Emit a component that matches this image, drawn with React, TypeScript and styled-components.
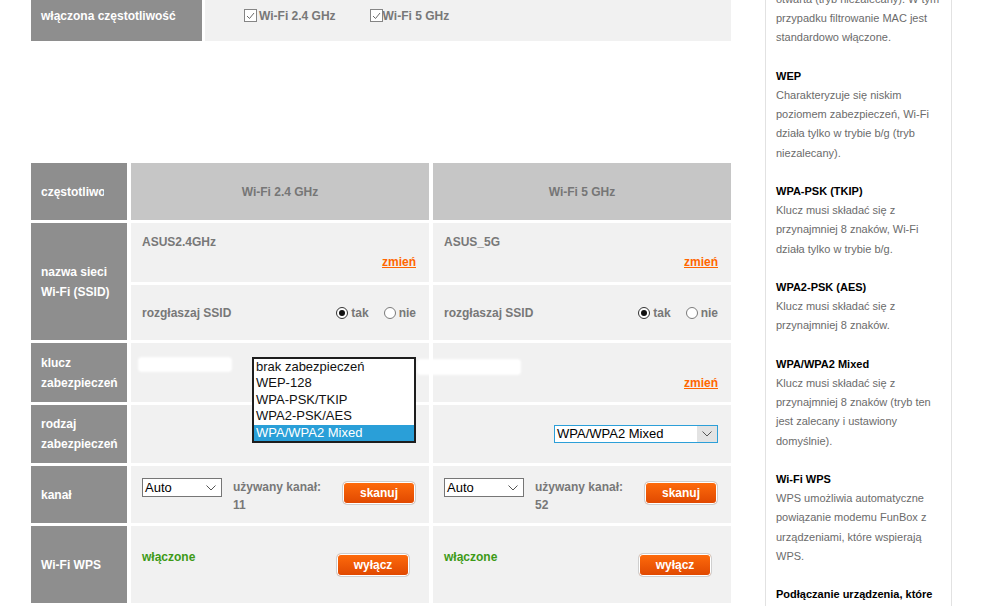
import styled, { createGlobalStyle } from "styled-components";

const GlobalStyle = createGlobalStyle`
  html, body {
    margin: 0;
    padding: 0;
    background: #fff;
  }
  body {
    font-family: "Liberation Sans", Arial, sans-serif;
    overflow: hidden;
  }
`;

interface HelpBlock {
  title?: string;
  lines: string[];
}

const HELP: HelpBlock[] = [
  {
    lines: [
      "otwarta (tryb niezalecany). W tym",
      "przypadku filtrowanie MAC jest",
      "standardowo włączone.",
    ],
  },
  {
    title: "WEP",
    lines: [
      "Charakteryzuje się niskim",
      "poziomem zabezpieczeń, Wi-Fi",
      "działa tylko w trybie b/g (tryb",
      "niezalecany).",
    ],
  },
  {
    title: "WPA-PSK (TKIP)",
    lines: [
      "Klucz musi składać się z",
      "przynajmniej 8 znaków, Wi-Fi",
      "działa tylko w trybie b/g.",
    ],
  },
  {
    title: "WPA2-PSK (AES)",
    lines: ["Klucz musi składać się z", "przynajmniej 8 znaków."],
  },
  {
    title: "WPA/WPA2 Mixed",
    lines: [
      "Klucz musi składać się z",
      "przynajmniej 8 znaków (tryb ten",
      "jest zalecany i ustawiony",
      "domyślnie).",
    ],
  },
  {
    title: "Wi-Fi WPS",
    lines: [
      "WPS umożliwia automatyczne",
      "powiązanie modemu FunBox z",
      "urządzeniami, które wspierają",
      "WPS.",
    ],
  },
  {
    title: "Podłączanie urządzenia, które",
    lines: [],
  },
];

const SECURITY = [
  "brak zabezpieczeń",
  "WEP-128",
  "WPA-PSK/TKIP",
  "WPA2-PSK/AES",
  "WPA/WPA2 Mixed",
];

interface Band {
  name: string;
  ssid: string;
  channel: string;
}

const BANDS: Band[] = [
  { name: "Wi-Fi 2.4 GHz", ssid: "ASUS2.4GHz", channel: "11" },
  { name: "Wi-Fi 5 GHz", ssid: "ASUS_5G", channel: "52" },
];

/* ---------- layout ---------- */

const Page = styled.div`
  display: flex;
  align-items: stretch;
  width: 986px;
  height: 616px;
  margin-top: -10px;
`;

const Main = styled.div`
  width: 700px;
  margin-left: 31px;
`;

const FreqRow = styled.div`
  display: grid;
  grid-template-columns: 171px 526px;
  column-gap: 3px;
  height: 51px;
`;

const Table = styled.div`
  margin-top: 122px;
  display: grid;
  grid-template-columns: 96px 298px 298px;
  grid-template-rows: 57px 59px 55px 59px 58px 57px 77px;
  gap: 3px 4px;
`;

const Label = styled.div<{ $span?: number }>`
  grid-row: span ${(p) => p.$span ?? 1};
  background: #8e8e8e;
  color: #fff;
  font-weight: bold;
  font-size: 12px;
  line-height: 20px;
  padding: 0 10px;
  display: flex;
  align-items: center;
  overflow: hidden;
`;

const Clip = styled.span`
  display: block;
  width: 63px;
  overflow: hidden;
  white-space: nowrap;
`;

const Head = styled.div`
  background: #c6c6c6;
  color: #767676;
  font-weight: bold;
  font-size: 12px;
  display: flex;
  align-items: center;
  justify-content: center;
`;

const Cell = styled.div`
  position: relative;
  background: #f1f1f1;
  padding: 0 13px 0 11px;
  display: flex;
  align-items: center;
  font-size: 12px;
  line-height: 14px;
`;

const CheckCell = styled(Cell)`
  padding-left: 39px;
  gap: 34px;
`;

const SsidCell = styled(Cell)`
  flex-direction: column;
  align-items: stretch;
  padding-top: 12px;
`;

const RowCell = styled(Cell)`
  justify-content: space-between;
`;

const KeyCell = styled(Cell)`
  justify-content: flex-end;
  align-items: flex-end;
  padding-bottom: 12px;
`;

const SelectCell = styled(Cell)`
  justify-content: flex-end;
`;

const ChannelCell = styled(Cell)`
  align-items: flex-start;
`;

const WpsCell = styled(Cell)`
  padding-right: 19px;
  justify-content: space-between;
`;

/* ---------- parts ---------- */

const Value = styled.span`
  color: #787878;
  font-weight: bold;
`;

const ChangeLink = styled.a`
  align-self: flex-end;
  margin-top: 6px;
  color: #ff6600;
  font-weight: bold;
  text-decoration: underline;
  cursor: pointer;
`;

const KeyLink = styled(ChangeLink)`
  margin-top: 0;
`;

const Enabled = styled.span`
  align-self: flex-start;
  margin-top: 24px;
  color: #3d9a17;
  font-weight: bold;
`;

const CheckOption = styled.label<{ $gap?: number }>`
  display: flex;
  align-items: center;
  gap: ${(p) => p.$gap ?? 0}px;
  color: #787878;
  font-weight: bold;
`;

const CheckBox = styled.span`
  width: 13px;
  height: 13px;
  box-sizing: border-box;
  border: 1px solid #858585;
  background: #fff;
  display: inline-flex;
  align-items: center;
  justify-content: center;
`;

const Radios = styled.div`
  display: flex;
  align-items: center;
  gap: 15px;
`;

const RadioOption = styled.label`
  display: flex;
  align-items: center;
  gap: 3px;
  color: #787878;
  font-weight: bold;
`;

const RadioDot = styled.span<{ $on?: boolean }>`
  width: 12px;
  height: 12px;
  box-sizing: border-box;
  border-radius: 50%;
  border: 1px solid ${(p) => (p.$on ? "#333" : "#7a7a7a")};
  background: #fff;
  display: inline-flex;
  align-items: center;
  justify-content: center;
  &::after {
    content: "";
    width: 6px;
    height: 6px;
    border-radius: 50%;
    background: ${(p) => (p.$on ? "#111" : "transparent")};
  }
`;

const SelectWrap = styled.div`
  position: relative;
`;

const SelectSlot = styled.div`
  margin-top: 12px;
`;

const SelectBox = styled.div<{ $w: number; $h: number; $focus?: boolean }>`
  width: ${(p) => p.$w}px;
  height: ${(p) => p.$h}px;
  box-sizing: border-box;
  border: 1px solid ${(p) => (p.$focus ? "#2c9fd8" : "#767676")};
  background: #fff;
  display: flex;
  align-items: center;
  justify-content: space-between;
  padding-left: 2px;
  font-size: 13px;
  color: #000;
`;

const Arrow = styled.span<{ $shade?: boolean }>`
  width: 20px;
  align-self: stretch;
  display: flex;
  align-items: center;
  justify-content: center;
  background: ${(p) => (p.$shade ? "#e3e3e3" : "transparent")};
`;

const Popup = styled.ul`
  position: absolute;
  left: 0;
  right: 0;
  bottom: 0;
  z-index: 2;
  margin: 0;
  padding: 0;
  list-style: none;
  box-sizing: border-box;
  border: 2px solid #1e1e1e;
  background: #fff;
`;

const PopupItem = styled.li<{ $active?: boolean }>`
  height: 16.4px;
  line-height: 16.4px;
  padding-left: 2px;
  font-size: 13px;
  color: ${(p) => (p.$active ? "#fff" : "#111")};
  background: ${(p) => (p.$active ? "#2a9fd8" : "transparent")};
  white-space: nowrap;
`;

const Redact = styled.span<{ $l: number; $t: number; $w: number; $h: number }>`
  position: absolute;
  left: ${(p) => p.$l}px;
  top: ${(p) => p.$t}px;
  width: ${(p) => p.$w}px;
  height: ${(p) => p.$h}px;
  background: #fff;
  border-radius: 4px;
  filter: blur(0.8px);
  z-index: 1;
`;

const Used = styled.div`
  margin: 12px 0 0 11px;
  color: #787878;
  font-weight: bold;
  line-height: 18px;
`;

const OrangeButton = styled.button<{ $top?: number }>`
  width: 74px;
  height: 24px;
  box-sizing: border-box;
  margin-left: auto;
  align-self: ${(p) => (p.$top !== undefined ? "flex-start" : "center")};
  margin-top: ${(p) => p.$top ?? 0}px;
  border: 1px solid #cfcfcf;
  border-radius: 5px;
  box-shadow: inset 0 0 0 1px #fff;
  background: linear-gradient(#ff6c0c, #df4700);
  color: #fff;
  font-family: inherit;
  font-weight: bold;
  font-size: 12px;
  cursor: pointer;
  padding: 0;
`;

const Sidebar = styled.aside`
  margin-left: 34px;
  width: 187px;
  box-sizing: border-box;
  border-left: 1px solid #e2e2e2;
  border-right: 1px solid #e2e2e2;
  padding-left: 10px;
  font-size: 11px;
  line-height: 19.2px;
  color: #6b6b6b;
  white-space: nowrap;
  overflow: hidden;
`;

const Block = styled.div`
  margin-bottom: 19.2px;
`;

const BlockTitle = styled.div`
  color: #000;
  font-weight: bold;
`;

/* ---------- small drawings ---------- */

const Tick = () => (
  <svg width="9" height="8" viewBox="0 0 9 8">
    <polyline points="1,4 3.5,6.5 8,1" fill="none" stroke="#6a6a6a" strokeWidth="1" />
  </svg>
);

const Chevron = () => (
  <svg width="10" height="6" viewBox="0 0 10 6">
    <polyline points="0.5,0.5 5,5 9.5,0.5" fill="none" stroke="#555" strokeWidth="1" />
  </svg>
);

const Select = ({ w, h, value, focus }: { w: number; h: number; value: string; focus?: boolean }) => (
  <SelectBox $w={w} $h={h} $focus={focus}>
    <span>{value}</span>
    <Arrow $shade={focus}>
      <Chevron />
    </Arrow>
  </SelectBox>
);

export default function App() {
  return (
    <>
      <GlobalStyle />
      <Page>
        <Main>
          <FreqRow>
            <Label>włączona częstotliwość</Label>
            <CheckCell>
              <CheckOption $gap={2}>
                <CheckBox>
                  <Tick />
                </CheckBox>
                Wi-Fi 2.4 GHz
              </CheckOption>
              <CheckOption>
                <CheckBox>
                  <Tick />
                </CheckBox>
                Wi-Fi 5 GHz
              </CheckOption>
            </CheckCell>
          </FreqRow>

          <Table>
            <Label>
              <Clip>częstotliwość</Clip>
            </Label>
            {BANDS.map((b) => (
              <Head key={b.name}>{b.name}</Head>
            ))}

            <Label $span={2}>
              nazwa sieci
              <br />
              Wi-Fi (SSID)
            </Label>
            {BANDS.map((b) => (
              <SsidCell key={b.ssid}>
                <Value>{b.ssid}</Value>
                <ChangeLink>zmień</ChangeLink>
              </SsidCell>
            ))}
            {BANDS.map((b) => (
              <RowCell key={b.name}>
                <Value>rozgłaszaj SSID</Value>
                <Radios>
                  <RadioOption>
                    <RadioDot $on />
                    tak
                  </RadioOption>
                  <RadioOption>
                    <RadioDot />
                    nie
                  </RadioOption>
                </Radios>
              </RowCell>
            ))}

            <Label>
              klucz
              <br />
              zabezpieczeń
            </Label>
            <KeyCell>
              <Redact $l={7} $t={14} $w={94} $h={15} />
            </KeyCell>
            <KeyCell>
              <Redact $l={-16} $t={16} $w={104} $h={16} />
              <KeyLink>zmień</KeyLink>
            </KeyCell>

            <Label>
              rodzaj
              <br />
              zabezpieczeń
            </Label>
            <SelectCell>
              <SelectWrap>
                <Select w={164} h={18} value="WPA/WPA2 Mixed" focus />
                <Popup>
                  {SECURITY.map((s) => (
                    <PopupItem key={s} $active={s === "WPA/WPA2 Mixed"}>
                      {s}
                    </PopupItem>
                  ))}
                </Popup>
              </SelectWrap>
            </SelectCell>
            <SelectCell>
              <Select w={164} h={18} value="WPA/WPA2 Mixed" focus />
            </SelectCell>

            <Label>kanał</Label>
            {BANDS.map((b) => (
              <ChannelCell key={b.channel}>
                <SelectSlot>
                  <Select w={80} h={19} value="Auto" />
                </SelectSlot>
                <Used>
                  używany kanał:
                  <br />
                  {b.channel}
                </Used>
                <OrangeButton $top={15}>skanuj</OrangeButton>
              </ChannelCell>
            ))}

            <Label>Wi-Fi WPS</Label>
            {BANDS.map((b) => (
              <WpsCell key={b.name}>
                <Enabled>włączone</Enabled>
                <OrangeButton>wyłącz</OrangeButton>
              </WpsCell>
            ))}
          </Table>
        </Main>

        <Sidebar>
          {HELP.map((block, i) => (
            <Block key={i}>
              {block.title && <BlockTitle>{block.title}</BlockTitle>}
              {block.lines.map((l) => (
                <div key={l}>{l}</div>
              ))}
            </Block>
          ))}
        </Sidebar>
      </Page>
    </>
  );
}
